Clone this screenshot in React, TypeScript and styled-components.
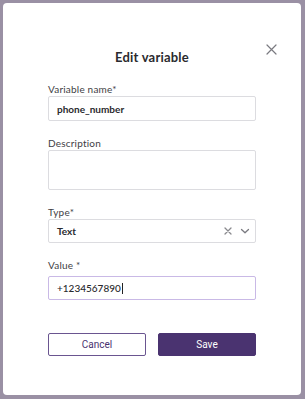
import styled, { createGlobalStyle } from "styled-components";

const Global = createGlobalStyle`
  html, body {
    margin: 0;
    padding: 0;
    background: #9b90a5;
  }
  * {
    box-sizing: border-box;
  }
`;

const App = () => {
  return (
    <Screen>
      <Global />
      <Overlay>
        <Modal>
          <CloseButton aria-label="Close">
            <svg width="11" height="11" viewBox="0 0 11 11">
              <path d="M1 1 L10 10 M10 1 L1 10" stroke="#7a7a80" strokeWidth="1.2" strokeLinecap="round" />
            </svg>
          </CloseButton>
          <Title>Edit variable</Title>

          <Field>
            <Label>Variable name*</Label>
            <Input defaultValue="phone_number" />
          </Field>

          <Field>
            <Label>Description</Label>
            <TextArea />
          </Field>

          <Field>
            <Label>Type*</Label>
            <Select>
              <SelectValue>Text</SelectValue>
              <SelectIcons>
                <svg width="8" height="8" viewBox="0 0 8 8">
                  <path d="M1 1 L7 7 M7 1 L1 7" stroke="#8a8a8e" strokeWidth="1.3" strokeLinecap="round" />
                </svg>
                <svg width="10" height="8" viewBox="0 0 10 8">
                  <path d="M1.5 2.5 L5 5.8 L8.5 2.5" stroke="#7a7a80" strokeWidth="1.3" fill="none" strokeLinecap="round" strokeLinejoin="round" />
                </svg>
              </SelectIcons>
            </Select>
          </Field>

          <Field $gap={5}>
            <Label>Value *</Label>
            <FocusedInput>
              +1234567890
              <Caret />
            </FocusedInput>
          </Field>

          <Actions>
            <Button>Cancel</Button>
            <Button $primary>Save</Button>
          </Actions>
        </Modal>
      </Overlay>
    </Screen>
  );
};

export default App;

const Screen = styled.div`
  position: relative;
  width: 305px;
  height: 399px;
  overflow: hidden;
  background: #e8e6ea;
`;

const Overlay = styled.div`
  position: absolute;
  inset: 0;
  background: rgba(60, 40, 80, 0.45);
  padding: 3px 4px 4px 3px;
`;

const Modal = styled.div`
  position: relative;
  height: 100%;
  background: #fff;
  border-radius: 4px;
  padding: 45px 45px 0 45px;
  display: flex;
  flex-direction: column;
  font-family: "Lato", "Noto Sans", sans-serif;
`;

const CloseButton = styled.button`
  position: absolute;
  top: 41px;
  right: 24px;
  width: 11px;
  height: 11px;
  padding: 0;
  border: none;
  background: none;
  display: flex;
  cursor: pointer;
`;

const Title = styled.h2`
  margin: 0 0 17px 0;
  text-align: center;
  font-size: 13px;
  line-height: 18px;
  font-weight: 700;
  color: #2a2a2e;
  letter-spacing: 0.2px;
`;

const Field = styled.div<{ $gap?: number }>`
  display: flex;
  flex-direction: column;
  gap: ${(p) => p.$gap ?? 1}px;
  margin-bottom: 16px;
`;

const Label = styled.label`
  font-size: 10px;
  line-height: 12px;
  color: #3e3e44;
  letter-spacing: 0.2px;
`;

const inputBase = `
  width: 100%;
  border: 1px solid #dcdce0;
  border-radius: 2px;
  background: #fff;
  padding: 0 8px;
  font-family: "Lato", "Noto Sans", sans-serif;
  font-size: 10px;
  font-weight: 700;
  color: #2a2a2e;
  outline: none;
`;

const Input = styled.input`
  ${inputBase}
  height: 25px;
`;

const TextArea = styled.textarea`
  ${inputBase}
  height: 40px;
  resize: none;
  display: block;
`;

const Select = styled.div`
  ${inputBase}
  height: 24px;
  display: flex;
  align-items: center;
  justify-content: space-between;
  padding-right: 5px;
`;

const SelectValue = styled.span``;

const SelectIcons = styled.span`
  display: flex;
  align-items: center;
  gap: 8px;
`;

const FocusedInput = styled.div`
  ${inputBase}
  height: 24px;
  border-color: #c9b9e6;
  display: flex;
  align-items: center;
  font-weight: 500;
`;

const Caret = styled.span`
  display: inline-block;
  width: 1px;
  height: 11px;
  margin-left: 1px;
  background: #222;
`;

const Actions = styled.div`
  display: grid;
  grid-template-columns: 1fr 1fr;
  gap: 12px;
  margin-top: 17px;
`;

const Button = styled.button<{ $primary?: boolean }>`
  height: 23px;
  border-radius: 2px;
  border: 1px solid ${(p) => (p.$primary ? "#4a3370" : "#6a5590")};
  background: ${(p) => (p.$primary ? "#4a3370" : "#fff")};
  color: ${(p) => (p.$primary ? "#fff" : "#4a3370")};
  font-family: "Roboto", sans-serif;
  font-size: 10px;
  cursor: pointer;
`;
